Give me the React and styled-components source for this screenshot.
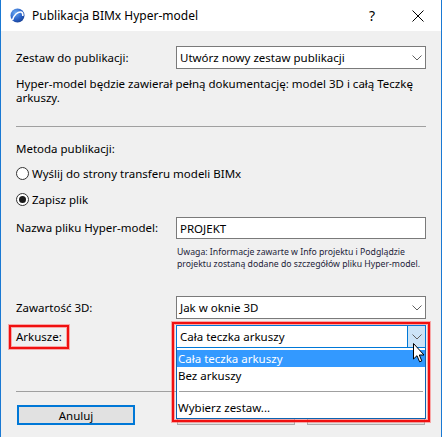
import React from 'react';
import styled, { createGlobalStyle } from 'styled-components';

const Global = createGlobalStyle`
  html, body { margin: 0; padding: 0; background: #ffffff; }
  body { font-family: "Noto Sans", "Segoe UI", sans-serif; }
`;

const Window = styled.div`
  position: relative;
  width: 442px;
  height: 437px;
  box-sizing: border-box;
  border-left: 1px solid #1a79d3;
  border-right: 1px solid #1a79d3;
  overflow: hidden;
  display: flex;
  flex-direction: column;
  font-size: 11.5px;
  color: #000;
`;

const TitleBar = styled.div`
  height: 31px;
  flex: none;
  background: #ffffff;
  display: flex;
  align-items: center;
  padding-left: 9px;
`;

const Title = styled.span`
  margin-left: 7px;
  font-size: 12px;
  color: #000;
  flex: 1;
`;

const TitleButton = styled.div`
  width: 46px;
  height: 31px;
  display: flex;
  align-items: center;
  justify-content: center;
  font-size: 14px;
  color: #000;
`;

const Content = styled.div`
  flex: 1;
  background: #f0f0f0;
  padding: 15px 15px 0 15px;
  display: flex;
  flex-direction: column;
`;

const Row = styled.div`
  display: grid;
  grid-template-columns: 160px 250px;
  align-items: center;
  margin-top: ${p => p.$mt || 0}px;
`;

const Label = styled.span`
  line-height: 14px;
  white-space: nowrap;
`;

const MarkedLabel = styled(Label)`
  position: relative;
  justify-self: start;
  &::after {
    content: '';
    position: absolute;
    left: -7px;
    right: -7px;
    top: -5px;
    bottom: -5px;
    border: 2px solid #f01010;
    box-shadow: 0 0 0 1px rgba(255, 80, 80, 0.45), inset 0 0 0 1px rgba(255, 80, 80, 0.45);
  }
`;

const Text = styled.div`
  line-height: 14px;
  margin-top: ${p => p.$mt || 0}px;
`;

const Separator = styled.div`
  height: 1px;
  background: #a0a0a0;
  margin-top: ${p => p.$mt || 0}px;
`;

const Select = styled.div`
  position: relative;
  height: 23px;
  box-sizing: border-box;
  background: #fff;
  border: 1px solid ${p => (p.$focused ? '#0078d7' : '#7a7a7a')};
  display: flex;
  align-items: center;
`;

const SelectValue = styled.span`
  flex: 1;
  padding-left: 3px;
  white-space: nowrap;
`;

const DropButton = styled.div`
  width: 17px;
  align-self: stretch;
  display: flex;
  align-items: center;
  justify-content: center;
  background: ${p => (p.$active ? '#cce4f7' : 'transparent')};
  border-left: 1px solid ${p => (p.$active ? '#0078d7' : 'transparent')};
`;

const TextInput = styled.div`
  height: 22px;
  box-sizing: border-box;
  background: #fff;
  border: 1px solid #7a7a7a;
  display: flex;
  align-items: center;
  padding-left: 3px;
`;

const RadioRow = styled.div`
  display: flex;
  align-items: center;
  height: 16px;
  margin-top: ${p => p.$mt || 0}px;
`;

const RadioCircle = styled.span`
  width: 13px;
  height: 13px;
  box-sizing: border-box;
  border-radius: 50%;
  border: 1px solid #333;
  background: #fff;
  display: flex;
  align-items: center;
  justify-content: center;
  margin-right: 3px;
  &::after {
    content: '';
    width: 7px;
    height: 7px;
    border-radius: 50%;
    background: ${p => (p.$checked ? '#1a1a1a' : 'transparent')};
  }
`;

const Note = styled.div`
  grid-column: 2;
  padding-left: 1px;
  font-size: 8.7px;
  line-height: 11.5px;
  color: #1c1c38;
  white-space: nowrap;
`;

const ComboWrap = styled.div`
  position: relative;
`;

const DropList = styled.div`
  position: absolute;
  top: 100%;
  left: 0;
  right: 0;
  height: 71px;
  box-sizing: border-box;
  background: #fff;
  border: 1px solid #0b63b0;
  border-top: none;
  padding-top: 2px;
  z-index: 2;
`;

const ListItem = styled.div`
  height: ${p => p.$h || 17}px;
  line-height: ${p => p.$h || 17}px;
  padding-left: 1px;
  background: ${p => (p.$selected ? '#3399ff' : 'transparent')};
  color: ${p => (p.$selected ? '#fff' : '#000')};
  white-space: nowrap;
`;

const ListSeparator = styled.div`
  height: 13px;
  display: flex;
  align-items: center;
  padding: 0 2px;
  &::after {
    content: '';
    flex: 1;
    height: 1px;
    background: #a0a0a0;
  }
`;

const RedFrame = styled.div`
  position: absolute;
  left: -4px;
  right: -4px;
  top: -3px;
  height: 100px;
  box-sizing: border-box;
  border: 2px solid #f01010;
  box-shadow: 0 0 0 1px rgba(255, 80, 80, 0.45), inset 0 0 0 1px rgba(255, 80, 80, 0.45);
  z-index: 3;
  pointer-events: none;
`;

const Cursor = styled.svg`
  position: absolute;
  left: 237px;
  top: 18px;
  z-index: 4;
`;

const ButtonRow = styled.div`
  display: flex;
  align-items: center;
  margin-top: ${p => p.$mt || 0}px;
  padding: 0 1px;
`;

const Spacer = styled.div`
  flex: 1;
`;

const Button = styled.div`
  width: 118px;
  height: 20px;
  box-sizing: border-box;
  background: #e1e1e1;
  border: ${p => (p.$default ? '2px solid #0078d7' : '1px solid #adadad')};
  display: flex;
  align-items: center;
  justify-content: center;
  margin-left: ${p => p.$ml || 0}px;
`;

const Chevron = () => (
  <svg width="10" height="6" viewBox="0 0 10 6">
    <path d="M0.5 0.5 L5 5 L9.5 0.5" fill="none" stroke="#606060" strokeWidth="1" />
  </svg>
);

const AppIcon = () => (
  <svg width="15" height="15" viewBox="0 0 15 15">
    <defs>
      <radialGradient id="g" cx="0.35" cy="0.3" r="0.8">
        <stop offset="0" stopColor="#6aa8f0" />
        <stop offset="0.6" stopColor="#2a62c8" />
        <stop offset="1" stopColor="#163c8c" />
      </radialGradient>
    </defs>
    <circle cx="7.5" cy="7.5" r="7" fill="url(#g)" />
    <path d="M2.5 12 C4 6.5 8 3.5 11 4 C12.5 4.3 13 6 12.8 8" fill="none" stroke="#fff" strokeWidth="1.6" />
  </svg>
);

const CloseIcon = () => (
  <svg width="12" height="12" viewBox="0 0 12 12">
    <path d="M0.5 0.5 L11.5 11.5 M11.5 0.5 L0.5 11.5" stroke="#000" strokeWidth="1" />
  </svg>
);

export default function App() {
  return (
    <>
      <Global />
      <Window>
        <TitleBar>
          <AppIcon />
          <Title>Publikacja BIMx Hyper-model</Title>
          <TitleButton>?</TitleButton>
          <TitleButton><CloseIcon /></TitleButton>
        </TitleBar>
        <Content>
          <Row>
            <Label>Zestaw do publikacji:</Label>
            <Select>
              <SelectValue>Utwórz nowy zestaw publikacji</SelectValue>
              <DropButton><Chevron /></DropButton>
            </Select>
          </Row>
          <Text $mt={8}>
            Hyper-model będzie zawierał pełną dokumentację: model 3D i całą Teczkę arkuszy.
          </Text>
          <Separator $mt={21} />
          <Text $mt={15}>Metoda publikacji:</Text>
          <RadioRow $mt={9}>
            <RadioCircle />
            Wyślij do strony transferu modeli BIMx
          </RadioRow>
          <RadioRow $mt={10}>
            <RadioCircle $checked />
            Zapisz plik
          </RadioRow>
          <Row $mt={10}>
            <Label>Nazwa pliku Hyper-model:</Label>
            <TextInput>PROJEKT</TextInput>
          </Row>
          <Row $mt={8}>
            <Note>
              Uwaga: Informacje zawarte w Info projektu i Podglądzie<br />
              projektu zostaną dodane do szczegółów pliku Hyper-model.
            </Note>
          </Row>
          <Row $mt={26}>
            <Label>Zawartość 3D:</Label>
            <Select>
              <SelectValue>Jak w oknie 3D</SelectValue>
              <DropButton><Chevron /></DropButton>
            </Select>
          </Row>
          <Row $mt={6}>
            <MarkedLabel>Arkusze:</MarkedLabel>
            <ComboWrap>
              <Select $focused>
                <SelectValue>Cała teczka arkuszy</SelectValue>
                <DropButton $active><Chevron /></DropButton>
              </Select>
              <DropList>
                <ListItem $selected>Cała teczka arkuszy</ListItem>
                <ListItem $h={18}>Bez arkuszy</ListItem>
                <ListSeparator />
                <ListItem $h={19}>Wybierz zestaw...</ListItem>
              </DropList>
              <RedFrame />
              <Cursor width="12" height="20" viewBox="0 0 12 20">
                <path d="M0.5 0.5 L0.5 16 L4 12.7 L6.6 18.8 L8.8 17.9 L6.3 12 L11 12 Z" fill="#fff" stroke="#000" strokeWidth="1" strokeLinejoin="miter" />
              </Cursor>
            </ComboWrap>
          </Row>
          <Separator $mt={43} />
          <ButtonRow $mt={13}>
            <Button $default>Anuluj</Button>
            <Spacer />
            <Button />
            <Button $ml={12} />
          </ButtonRow>
        </Content>
      </Window>
    </>
  );
}
